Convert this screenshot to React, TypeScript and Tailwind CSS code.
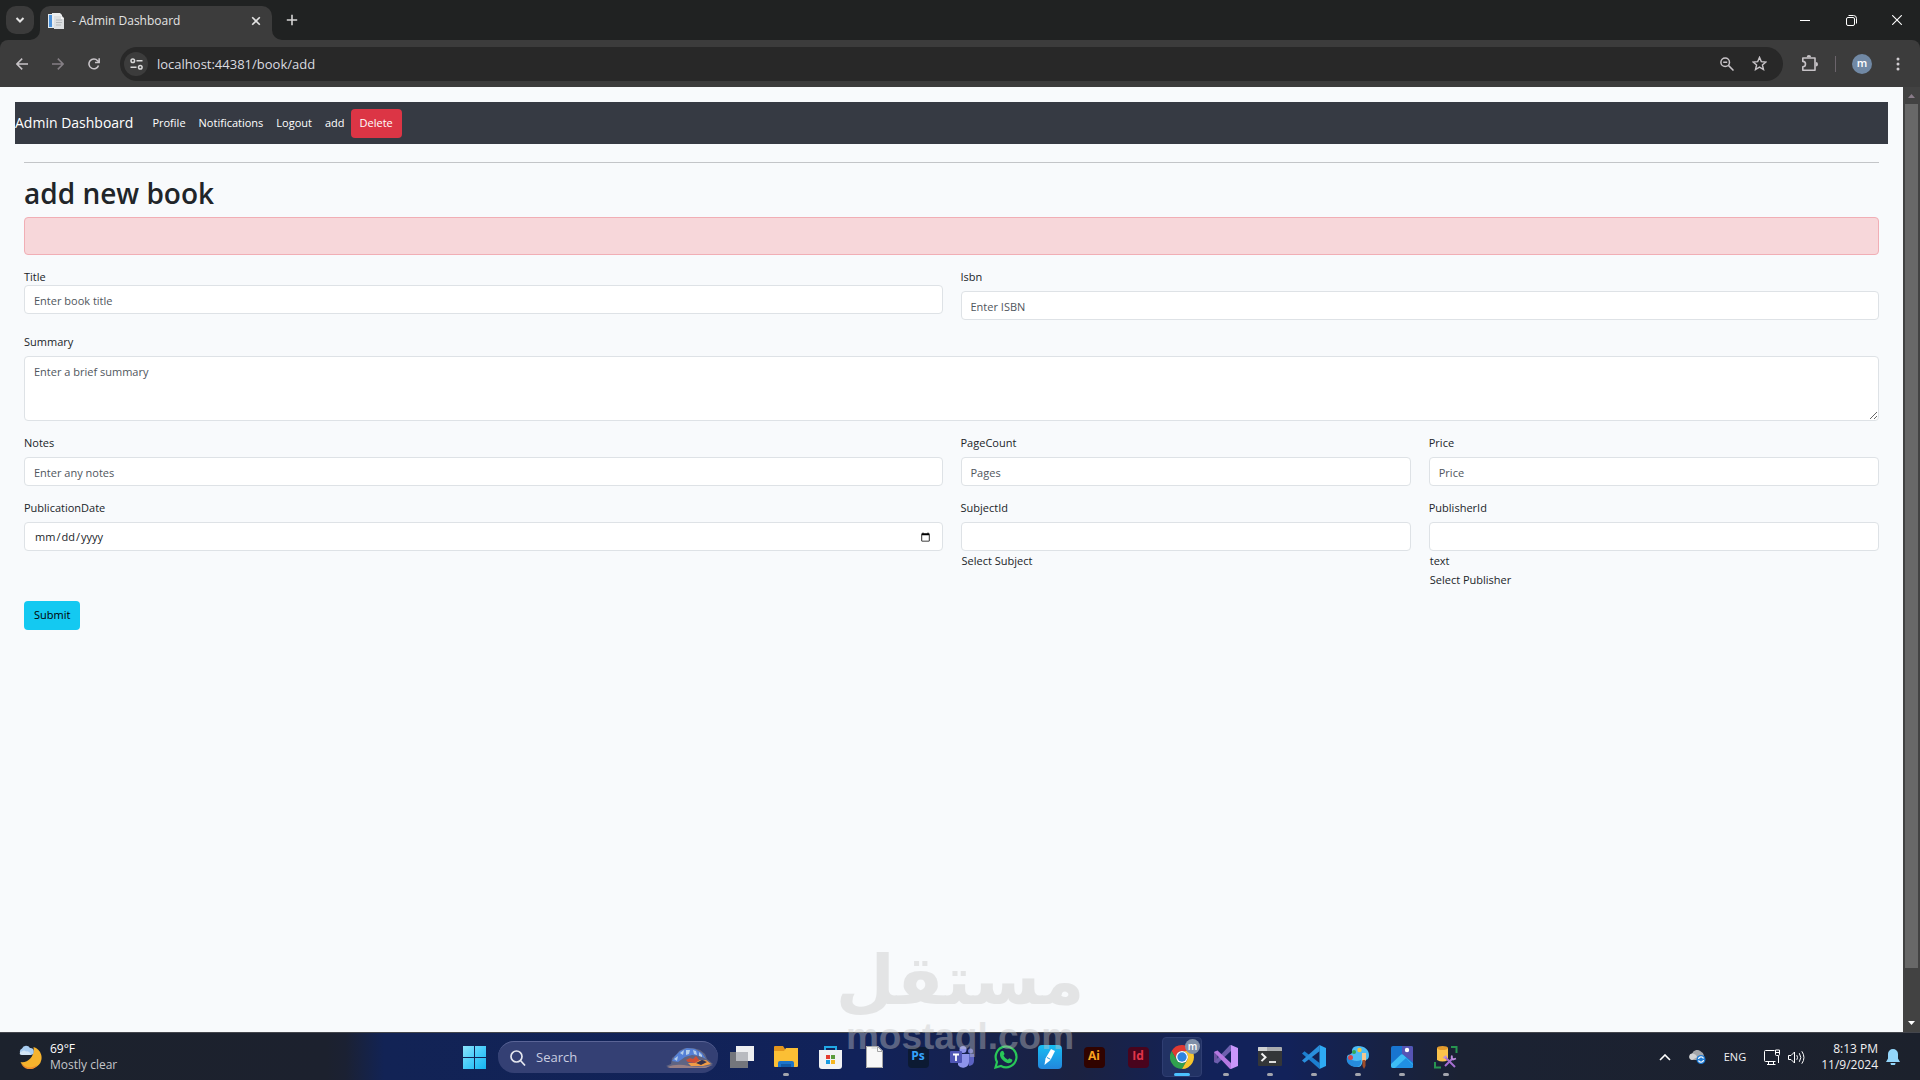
import { useId, type ReactNode } from "react";

const field =
  "block w-full rounded-[4px] border border-[#dee2e6] bg-white px-[9px] text-[11px] text-[#212529] placeholder:text-[#50565d] outline-none focus:border-[#86b7fe]";

function TitleBar() {
  return (
    <div className="flex h-10 shrink-0 items-start bg-[#202222]">
      <button aria-label="Search tabs" className="mt-1.5 ml-1.5 flex size-7 items-center justify-center rounded-[10px] bg-[#3b3b3b]">
        <svg width="12" height="12" viewBox="0 0 12 12" fill="none" stroke="#e3e3e3" strokeWidth="2">
          <path d="M2.5 4 6 7.5 9.5 4" />
        </svg>
      </button>
      <div className="relative ml-1.5 flex h-[34px] w-[232px] items-center self-end rounded-t-[10px] bg-[#3c3c3c] pr-2.5 pb-[5px] pl-2">
        <svg className="absolute bottom-0 -left-2.5" width="10" height="10" viewBox="0 0 10 10">
          <path d="M10 0v10H0A10 10 0 0 0 10 0Z" fill="#3c3c3c" />
        </svg>
        <svg className="absolute -right-2.5 bottom-0" width="10" height="10" viewBox="0 0 10 10">
          <path d="M0 0v10h10A10 10 0 0 1 0 0Z" fill="#3c3c3c" />
        </svg>
        <svg width="16" height="16" viewBox="0 0 16 16">
          <path d="M0 1h9v14H0Z" fill="#dfe9f1" />
          <path d="M1 2h3v12H1Z" fill="#4a90d9" />
          <path d="M4 0h8l2 2v9H4Z" fill="#eceeef" />
          <path d="M6 3h8l2 2v11H6Z" fill="#dcdfe1" />
          <path d="M8 7h6M8 9.5h6M8 12h5" stroke="#b3b8bb" />
          <path d="M13 3v3h3" fill="#f8f8f8" />
        </svg>
        <span className="ml-2 grow text-xs text-[#e3e3e3]">- Admin Dashboard</span>
        <button aria-label="Close tab" className="flex size-3 items-center justify-center">
          <svg width="10" height="10" viewBox="0 0 10 10" stroke="#e3e3e3" strokeWidth="1.6">
            <path d="m1.2 1.2 7.6 7.6M8.8 1.2 1.2 8.8" />
          </svg>
        </button>
      </div>
      <button aria-label="New tab" className="mt-3.5 ml-3.5 flex size-3 items-center justify-center">
        <svg width="12" height="12" viewBox="0 0 12 12" className="shrink-0" stroke="#d5d5d5" strokeWidth="1.6">
          <path d="M6 .8v10.4M.8 6h10.4" />
        </svg>
      </button>
      <div className="ml-auto flex h-10 items-center">
        <button aria-label="Minimize" className="flex w-[46px] justify-center">
          <svg width="10" height="10" viewBox="0 0 10 10" stroke="#fff">
            <path d="M0 5.5h10" />
          </svg>
        </button>
        <button aria-label="Restore" className="flex w-[46px] justify-center">
          <svg width="11" height="11" viewBox="0 0 11 11" fill="none" stroke="#fff">
            <rect x=".5" y="2.5" width="8" height="8" rx="1.5" />
            <path d="M2.5.5h5a3 3 0 0 1 3 3v5" />
          </svg>
        </button>
        <button aria-label="Close" className="flex w-[46px] justify-center">
          <svg width="10" height="10" viewBox="0 0 10 10" stroke="#fff" strokeWidth="1.1">
            <path d="m.2.2 9.6 9.6M9.8.2.2 9.8" />
          </svg>
        </button>
      </div>
    </div>
  );
}

function Toolbar() {
  return (
    <div className="bg-[#202222]">
      <div className="flex h-[47px] items-center rounded-t-[8px] bg-[#3c3c3c] pr-5 pl-4">
        <button aria-label="Back">
          <svg width="12" height="12" viewBox="0 0 12 12" fill="none" stroke="#c7c3c7" strokeWidth="1.5">
            <path d="M6.2.6.9 6l5.3 5.4M.9 6H12" />
          </svg>
        </button>
        <button aria-label="Forward" className="ml-6">
          <svg width="12" height="12" viewBox="0 0 12 12" fill="none" stroke="#857f85" strokeWidth="1.5">
            <path d="m5.8.6 5.3 5.4-5.3 5.4M11.1 6H0" />
          </svg>
        </button>
        <button aria-label="Reload" className="ml-6">
          <svg width="12" height="12" viewBox="0 0 13 13" fill="none" stroke="#c7c3c7" strokeWidth="1.7">
            <path d="M11.4 8A5.3 5.3 0 1 1 10.4 2.900L12 4.5" />
            <path d="M12.1.3v4.500H7.600" />
          </svg>
        </button>
        <div className="ml-5 flex h-[34px] grow items-center rounded-full bg-[#282828] pr-4 pl-1">
          <button aria-label="Site information" className="flex size-6 items-center justify-center rounded-full bg-[#3c3c3c]">
            <svg width="13" height="12" viewBox="0 0 13 12" fill="none" stroke="#d8d8d8" strokeWidth="1.5">
              <circle cx="2.8" cy="2.7" r="1.8" />
              <path d="M6.5 2.7h6M.5 9.200h6" />
              <circle cx="10.3" cy="9.2" r="1.8" />
            </svg>
          </button>
          <input
            aria-label="Address"
            defaultValue="localhost:44381/book/add"
            className="ml-[9px] h-6 min-w-0 grow bg-transparent text-[13px] text-[#dcdce0] outline-none"
          />
          <button aria-label="Zoom">
            <svg width="14" height="14" viewBox="0 0 14 14" fill="none" stroke="#c7c3c7" strokeWidth="1.5">
              <circle cx="5.2" cy="5.2" r="4.3" />
              <path d="m8.4 8.4 5.100 5.100M3.200 5.200h4" />
            </svg>
          </button>
          <button aria-label="Bookmark" className="ml-[18px]">
            <svg width="15" height="15" viewBox="0 0 15 15" fill="none" stroke="#c7c3c7" strokeWidth="1.4">
              <path d="m7.5 1.4 1.8 4.2 4.6.4-3.5 3 1.1 4.5-4-2.4-4 2.4L4.6 9 1.1 6l4.6-.4Z" />
            </svg>
          </button>
        </div>
        <button aria-label="Extensions" className="ml-[18px]">
          <svg width="17" height="17" viewBox="0 0 17 17" fill="none" stroke="#c7c3c7" strokeWidth="1.6" strokeLinejoin="round">
            <path d="M1.800 3H14V15.200H1.800V11.800A2.700 2.700 0 0 0 1.800 6.400Z" />
            <path d="M5.700 2.200a2.200 2.200 0 0 1 4.400 0ZM14.800 7a2.200 2.200 0 0 1 0 4.400Z" fill="#c7c3c7" stroke="none" />
          </svg>
        </button>
        <span className="ml-[17px] h-4 w-px bg-[#6b646b]" />
        <button aria-label="Profile m" className="ml-4 flex size-5 items-center justify-center rounded-full bg-[#7189a5] pb-0.5 text-[11px] leading-none font-semibold text-white">
          m
        </button>
        <button aria-label="Menu" className="ml-6">
          <svg width="4" height="14" viewBox="0 0 4 14" fill="#d0ccd0">
            <circle cx="2" cy="2" r="1.5" />
            <circle cx="2" cy="7" r="1.5" />
            <circle cx="2" cy="12" r="1.5" />
          </svg>
        </button>
      </div>
    </div>
  );
}

interface FieldProps {
  label: string;
  type?: string;
  placeholder?: string;
  span?: string;
  tight?: boolean;
  notes?: string[];
}

function Field({ label, type = "text", placeholder, span = "col-span-1", tight, notes = [] }: FieldProps) {
  const id = useId();
  return (
    <div className={span}>
      <label htmlFor={id} className={tight ? "block pt-0.5 leading-4" : "mb-1.5 block pt-0.5 leading-4"}>
        {label}
      </label>
      {type === "textarea" ? (
        <textarea id={id} placeholder={placeholder} className={`${field} h-[65px] resize py-1.5 leading-[18px]`} />
      ) : (
        <input id={id} type={type} placeholder={placeholder} className={`${field} h-[29px] pt-0.5`} />
      )}
      {notes.map((n) => (
        <span key={n} className="block px-px leading-[19px]">
          {n}
        </span>
      ))}
    </div>
  );
}

function BookPage() {
  return (
    <main className="min-w-0 grow overflow-hidden bg-[#f8fafc] px-[15px] pt-[15px] text-[11px] text-[#212529]">
      <nav className="flex h-[42px] items-center bg-[#363a43] text-white">
        <a href="#home" className="text-sm">Admin Dashboard</a>
        <div className="ml-[19px] flex items-center gap-[13px]">
          <a href="#profile">Profile</a>
          <a href="#notifications">Notifications</a>
          <a href="#logout">Logout</a>
          <a href="#add">add</a>
        </div>
        <button className="ml-1.5 h-[29px] rounded-[4px] bg-[#dc3545] px-[9px]">Delete</button>
      </nav>
      <div className="px-[9px] pt-[18px]">
        <hr className="border-t border-[#c3c5c8]" />
        <h1 className="mt-[13px] mb-1.5 text-[28px] leading-[35px] font-semibold">add new book</h1>
        <div role="alert" className="h-[38px] rounded-[4px] border border-[#f1aeb5] bg-[#f7d7da]" />
        <form className="mt-3 grid grid-cols-4 gap-x-[18px] gap-y-3" onSubmit={(e) => e.preventDefault()}>
          <Field label="Title" placeholder="Enter book title" span="col-span-2" tight />
          <Field label="Isbn" placeholder="Enter ISBN" span="col-span-2" />
          <Field label="Summary" type="textarea" placeholder="Enter a brief summary" span="col-span-4" />
          <Field label="Notes" placeholder="Enter any notes" span="col-span-2" />
          <Field label="PageCount" placeholder="Pages" />
          <Field label="Price" placeholder="Price" />
          <Field label="PublicationDate" type="date" span="col-span-2" />
          <Field label="SubjectId" notes={["Select Subject"]} />
          <Field label="PublisherId" notes={["text", "Select Publisher"]} />
          <div className="col-span-4">
            <button type="submit" className="h-[29px] rounded-[4px] bg-[#14c9f1] px-2.5 text-black">
              Submit
            </button>
          </div>
        </form>
      </div>
    </main>
  );
}

function ScrollBar() {
  return (
    <div className="flex w-[17px] shrink-0 flex-col items-center bg-[#424242]">
      <svg width="7" height="17" viewBox="0 0 7 17" className="shrink-0">
        <path d="M0 11h7L3.5 7Z" fill="#8a7c8a" />
      </svg>
      <div className="mr-px w-[13px] grow bg-[#686868]" />
      <div className="flex h-16 items-end pb-[7px]">
        <svg width="7" height="4" viewBox="0 0 7 4">
          <path d="M0 0h7L3.5 4Z" fill="#fff" />
        </svg>
      </div>
    </div>
  );
}

function Tile({ label, children, running }: { label: string; children: ReactNode; running?: boolean }) {
  return (
    <button aria-label={label} className="relative flex h-12 w-11 items-center justify-center">
      {children}
      {running && <span className="absolute bottom-[5px] h-[3px] w-1.5 rounded-full bg-[#a3a5ad]" />}
    </button>
  );
}

function AdobeMark({ text, className }: { text: string; className: string }) {
  return (
    <span className={`flex size-[21px] items-center justify-center rounded-[4px] pb-0.5 text-xs leading-none font-bold ${className}`}>
      {text}
    </span>
  );
}

function Taskbar() {
  return (
    <footer className="grid h-12 shrink-0 grid-cols-[1fr_auto_1fr] items-center border-t border-[#44464d] bg-[linear-gradient(90deg,#1c222d_0%,#1c212e_17%,#1b2133_18%,#122355_20%,#11225a_45%,#1b2241_56%,#12225a_63%,#12225a_67%,#1b2233_76%,#1c212c_100%)] text-xs text-white">
      <button className="flex items-center justify-self-start pl-[18px] text-left">
        <svg width="24" height="24" viewBox="0 0 24 24">
          <path d="M15.5 2A11 11 0 1 1 2.500 17C10 18.500 17 11 15.500 2Z" fill="#f6b32d" />
          <path d="M3 18c4 5 11 6 16 2-3 6-13 6-16-2Z" fill="#ef8b2c" />
          <path d="M4 10a3.500 3.500 0 0 1 0-6.500A4.500 4.500 0 0 1 12 3a3.500 3.500 0 0 1 .5 7Z" fill="#a9cdf0" />
          <path d="M2 9.500Q1 7 4 6.500q2-2 4 0 3-1 5 3L12 10H4Z" fill="#d4e5f5" />
        </svg>
        <span className="ml-2 leading-4">
          <span className="block">69°F</span>
          <span className="block text-[#c4c5ca]">Mostly clear</span>
        </span>
      </button>

      <div className="flex items-center">
        <Tile label="Start">
          <svg width="23" height="23" viewBox="0 0 23 23">
            <defs>
              <linearGradient id="win" x1="0" y1="0" x2="1" y2="1">
                <stop offset="0" stopColor="#8be3fb" />
                <stop offset=".5" stopColor="#47ccfa" />
                <stop offset="1" stopColor="#14b4f0" />
              </linearGradient>
            </defs>
            <path d="M0 0h11v11H0ZM12 0h11v11H12ZM0 12h11v11H0ZM12 12h11v11H12Z" fill="url(#win)" />
          </svg>
        </Tile>
        <label className="mx-0.5 flex h-8 w-[220px] items-center rounded-full border-t border-[#5a6496] bg-[#344074] pr-1 pl-3">
          <svg width="16" height="16" viewBox="0 0 16 16" fill="none" stroke="#e4e6ee" strokeWidth="1.700">
            <circle cx="6.5" cy="6.5" r="5.5" />
            <path d="m10.500 10.500 4.500 5" />
          </svg>
          <input aria-label="Search" placeholder="Search" className="ml-2.5 w-24 grow bg-transparent text-[13px] text-white outline-none placeholder:text-[#c9cde0]" />
          <svg width="48" height="22" viewBox="0 0 48 22">
            <path d="M0 19 5 17 6 11 10 8 13 4 19 1 27 1 34 3 39 7 41 12 47 17 40 21 6 21Z" fill="#5f6483" />
            <path d="M6 14 9 9 14 4 21 1 29 2 36 6 40 12 34 9 26 8 19 10 12 15Z" fill="#5580d6" />
            <path d="m8 12 4-3-1 5ZM14 6l4-3-1 5ZM20 3l4 0-1 4-3 1ZM27 3l3 1 1 4-3-1ZM33 5l3 3 0 2-3-1Z" fill="#b4cdea" />
            <path d="M20 13 24 11 27 12 30 9 34 14 29 16 22 15Z" fill="#cf4f34" />
            <path d="m22 16 7 0 5-3 2 1 4-1 5 4-8 2H25Z" fill="#ef9c47" />
            <path d="m30 16 6-3 5 2-6 3Z" fill="#33324c" />
            <path d="M1 20q10-4 22-1 12 2 24-1l-8 3H4Z" fill="#9a8084" />
          </svg>
        </label>
        <Tile label="Task view">
          <svg width="24" height="22" viewBox="0 0 24 22">
            <path d="M6 0h18v15H6Z" fill="#eeeff1" />
            <path d="M0 6h18v16H0Z" fill="#74767c" />
            <path d="M6 6h12v9H6Z" fill="#b9bbc0" />
          </svg>
        </Tile>
        <Tile label="File Explorer" running>
          <svg width="24" height="22" viewBox="0 0 24 22">
            <path d="M0 1q0-1 1-1h8l2 3v4H0Z" fill="#e2951d" />
            <path d="M0 5h10l2-3h12v18q0 1-1 1H1q-1 0-1-1Z" fill="#fbbf35" />
            <path d="M4 21v-4q0-2 2-2h12q2 0 2 2v4Z" fill="#1d74c9" />
            <path d="M7 18h10v3H7Z" fill="#135aa5" />
          </svg>
        </Tile>
        <Tile label="Microsoft Store">
          <svg width="23" height="23" viewBox="0 0 23 23">
            <path d="M6 5V1h11v4" fill="none" stroke="#21a8e6" strokeWidth="2" />
            <path d="M0 4h23v16q0 3-3 3H3q-3 0-3-3Z" fill="#f1f2f4" />
            <path d="M7 9h4v4H7Z" fill="#e43b2f" />
            <path d="M12 9h4v4h-4Z" fill="#5a9b3c" />
            <path d="M7 14h4v4H7Z" fill="#1a9be0" />
            <path d="M12 14h4v4h-4Z" fill="#f5b51f" />
          </svg>
        </Tile>
        <Tile label="Document">
          <svg width="17" height="22" viewBox="0 0 17 22">
            <path d="M0 0h12l5 5v17H0Z" fill="#f8f8f8" />
            <path d="M11.500.5v5h5M.5.5h11l5 5v16H.5Z" fill="none" stroke="#a5a5a5" />
          </svg>
        </Tile>
        <Tile label="Photoshop"><AdobeMark text="Ps" className="bg-[#0c1a33] text-[#35a4fb]" /></Tile>
        <Tile label="Teams">
          <svg width="24" height="22" viewBox="0 0 24 22">
            <circle cx="13" cy="3.5" r="3.5" fill="#8d94ea" />
            <circle cx="20.5" cy="5" r="2.5" fill="#6e74cf" />
            <path d="M17 8h7v7a5 5 0 0 1-5 5Z" fill="#5b62c2" />
            <path d="M8 8h11v8a6 6 0 0 1-11 3Z" fill="#8d94ea" />
            <rect y="5" width="12" height="12" rx="1" fill="#4f56b5" />
            <path d="M3 8.500h6M6 8.500v6.500" stroke="#fff" strokeWidth="1.8" />
          </svg>
        </Tile>
        <Tile label="WhatsApp">
          <svg width="24" height="24" viewBox="0 0 24 24">
            <path d="M1.500 22.500 3 17a10.400 10.400 0 1 1 4 4Z" fill="none" stroke="#29c758" strokeWidth="2.2" />
            <path d="M7 6.500c1-1.200 2-1 2.500 0l1 2.200c.2.700-.8 1.400-1 1.900 1 2 2.300 3.200 4.400 4.100.6-.2 1.200-1.600 1.900-1.300l2.300 1.100c.8.500 0 3.200-2.300 3.600C11.500 19 5.500 13 6 9.200 6.100 8 6.300 7.200 7 6.500Z" fill="#29c758" />
          </svg>
        </Tile>
        <Tile label="Notes">
          <svg width="24" height="24" viewBox="0 0 24 24">
            <defs>
              <linearGradient id="pen" x1="0" y1="0" x2="0" y2="1">
                <stop offset="0" stopColor="#17bdf3" />
                <stop offset="1" stopColor="#2386dc" />
              </linearGradient>
            </defs>
            <rect width="24" height="24" rx="4" fill="url(#pen)" />
            <path d="m13 4 4 2-4.500 9-6 5 1-6.500Z" fill="#fff" />
            <path d="m9 12.500 3.500 1.800" stroke="#2a9be0" />
          </svg>
        </Tile>
        <Tile label="Illustrator"><AdobeMark text="Ai" className="bg-[#300300] text-[#f9a11f]" /></Tile>
        <Tile label="InDesign"><AdobeMark text="Id" className="bg-[#49041d] text-[#e2354b]" /></Tile>
        <button aria-label="Chrome" className="relative flex h-12 w-11 items-center justify-center">
          <span className="absolute inset-x-0.5 inset-y-1 rounded-[4px] border border-[#2f3e72] bg-[#223264]" />
          <svg className="relative" width="24" height="24" viewBox="0 0 24 24">
            <path d="M12 6h10.390A12 12 0 0 0 1.600 6l5.200 9A6 6 0 0 1 12 6Z" fill="#df3a32" />
            <path d="M6.800 15 1.600 6A12 12 0 0 0 12 24l5.200-9A6 6 0 0 1 6.800 15Z" fill="#31a04e" />
            <path d="M17.200 15 12 24A12 12 0 0 0 22.390 6H12A6 6 0 0 1 17.200 15Z" fill="#f8c52c" />
            <circle cx="12" cy="12" r="6" fill="#fff" />
            <circle cx="12" cy="12" r="4.7" fill="#2c83e0" />
          </svg>
          <span className="absolute top-1.5 right-1 flex size-[15px] items-center justify-center rounded-full bg-[#8090a8] pb-0.5 text-[10px] leading-none font-semibold">m</span>
          <span className="absolute bottom-[5px] h-[3px] w-4 rounded-full bg-[#4cc2ff]" />
        </button>
        <Tile label="Visual Studio" running>
          <svg width="24" height="24" viewBox="0 0 24 24">
            <path d="M0 7 3.500 5.500v13L0 17Z" fill="#6a52a0" />
            <path d="M3.500 18.500 17 6V0h-1L0 17Z" fill="#6d5fae" />
            <path d="M0 7 3.500 5.500 17 18v6h-1Z" fill="#b578e0" />
            <path d="m17 0 7 3v18l-7 3Z" fill="#c996fa" />
          </svg>
        </Tile>
        <Tile label="Terminal" running>
          <svg width="24" height="20" viewBox="0 0 24 20">
            <rect width="24" height="19" rx="1" fill="#343638" />
            <path d="M0 1q0-1 1-1h22q1 0 1 1v3H0Z" fill="#a9abae" />
            <path d="M0 1q0-1 1-1h8v4H0Z" fill="#cfd1d3" />
            <path d="m3.500 6.500 4 3.800-4 3.800" fill="none" stroke="#f1f1f1" strokeWidth="2" />
            <path d="M11 15h7" stroke="#f1f1f1" strokeWidth="1.8" />
          </svg>
        </Tile>
        <Tile label="VS Code" running>
          <svg width="24" height="24" viewBox="0 0 24 24">
            <path d="M0 8.500 2.500 6.300 17.500 18v6L0 8.500Z" fill="#1c7fd0" />
            <path d="M0 15.500 17.500 0v6.300L2.500 17.700Z" fill="#2a8fdd" />
            <path d="M17.500 0 24 3v18l-6.500 3Z" fill="#2eaaf3" />
          </svg>
        </Tile>
        <Tile label="Paint" running>
          <svg width="24" height="24" viewBox="0 0 24 24">
            <path d="M12 1c7 0 11 4 11 9s-3 5-5 5-1 7-6 7C5 22 1 17 1 12.500q0-3 3-3L6 8Q5 1 12 1Z" fill="#4dbcf3" />
            <path d="M1 12q-2 8 8 10 7 0 6-7-6 3-14-3Z" fill="#268cdd" />
            <circle cx="8" cy="7" r="2" fill="#32a852" />
            <circle cx="13.5" cy="5" r="2.2" fill="#f6c336" />
            <circle cx="4.5" cy="12.5" r="2.5" fill="#d6484b" />
            <path d="M16 8h4v8h-4Z" fill="#f2c690" />
            <path d="M16.500 15h3v6l-1.500 3-1.500-3Z" fill="#9f4d2a" />
          </svg>
        </Tile>
        <Tile label="Photos" running>
          <svg width="22" height="22" viewBox="0 0 22 22">
            <rect width="22" height="22" rx="2" fill="#1875d0" />
            <path d="M11 0h9q2 0 2 2v14L11 8Z" fill="#5654b4" />
            <path d="M0 18 9.500 9q1.500-1.500 3 0L22 18v2q0 2-2 2H2q-2 0-2-2Z" fill="#3dbdf5" />
            <path d="m4 22 11-10 7 7v1q0 2-2 2Z" fill="#2090e2" />
            <circle cx="16" cy="4" r="2.2" fill="#fff" />
          </svg>
        </Tile>
        <Tile label="SQL Server Management Studio" running>
          <svg width="24" height="24" viewBox="0 0 24 24">
            <path d="M3 3h11v12q-5.500 3-11 0Z" fill="#fbc34c" />
            <ellipse cx="8.5" cy="3" rx="5.5" ry="2" fill="#e39b2d" />
            <path d="M17 2h5.500v6M1 17v5.500h6" fill="none" stroke="#279550" strokeWidth="2" />
            <path d="m11 21 8-8M11 12l10 10" stroke="#a56fd0" strokeWidth="2" />
            <path d="M18 10.500q-1 3 1 4l3-1M9.500 13l3-2" fill="none" stroke="#bd8ddd" strokeWidth="1.8" />
          </svg>
        </Tile>
      </div>

      <div className="flex items-center justify-self-end pr-5 text-[#f1f1f3]">
        <button aria-label="Show hidden icons">
          <svg width="12" height="7" viewBox="0 0 12 7" fill="none" stroke="#fff" strokeWidth="1.6">
            <path d="m1 6 5-5 5 5" />
          </svg>
        </button>
        <button aria-label="OneDrive" className="ml-[18px]">
          <svg width="17" height="14" viewBox="0 0 17 14">
            <path d="M3 10a3.200 3.200 0 0 1 0-6.200A5.500 5.500 0 0 1 12.500 2 4 4 0 0 1 14 8l-5 2Z" fill="#a4a6aa" />
            <path d="M4 3.500Q7 4 8.500 7L3 10A3.200 3.200 0 0 1 4 3.500Z" fill="#d2d3d5" />
            <circle cx="12" cy="9.500" r="4.500" fill="#1d7ad4" />
            <path d="M9.500 9a2.600 2.600 0 0 1 5-.5M14.500 10a2.600 2.600 0 0 1-5 .5" fill="none" stroke="#fff" strokeWidth="1.3" />
          </svg>
        </button>
        <button className="ml-[18px] text-[11px]">ENG</button>
        <button aria-label="Network" className="ml-[18px]">
          <svg width="16" height="17" viewBox="0 0 16 17" fill="none" stroke="#fff">
            <path d="M10.500 1.500h-9q-1 0-1 1v9q0 1 1 1h10M14.500 7v7M4.500 12.500v3M9.500 12.500v3M3 15.500h8.500" />
            <path d="M11.500 1h4v4.500q0 1-1 1h-2q-1 0-1-1ZM11.500 3.500h4" />
          </svg>
        </button>
        <button aria-label="Volume" className="ml-2">
          <svg width="17" height="15" viewBox="0 0 17 15" fill="none" stroke="#fff">
            <path d="M.5 5.500h2.500L6.500 2v11L3 9.500H.5ZM8.800 5.200q1.500 2.300 0 4.600M11.300 3.200q3 4.300 0 8.600M13.800 1.300q4.300 6.200 0 12.400" />
          </svg>
        </button>
        <button className="ml-4 text-right text-xs leading-4">
          <span className="block">8:13 PM</span>
          <span className="block">11/9/2024</span>
        </button>
        <button aria-label="Notifications" className="ml-2">
          <svg width="14" height="16" viewBox="0 0 14 16" fill="#93d6fa">
            <path d="M7 0a5 5 0 0 1 5 5v4.500l2 3.500H0L2 9.500V5a5 5 0 0 1 5-5ZM4.500 14h5a2.500 2.500 0 0 1-5 0Z" />
          </svg>
        </button>
      </div>
    </footer>
  );
}

function Watermark() {
  return (
    <div className="pointer-events-none absolute bottom-[21px] left-1/2 flex -translate-x-1/2 flex-col items-center text-[#c5c5c5] opacity-40">
      <span lang="ar" dir="rtl" className="font-['DejaVu_Sans',sans-serif] text-[68px] leading-[68px] font-bold">
        مستقل
      </span>
      <span className="font-['Liberation_Sans',sans-serif] text-[37px] leading-[44px] font-bold">mostaql.com</span>
    </div>
  );
}

export default function App() {
  return (
    <div className="relative flex h-screen flex-col overflow-hidden font-['Open_Sans',sans-serif]">
      <TitleBar />
      <Toolbar />
      <div className="flex min-h-0 grow">
        <BookPage />
        <ScrollBar />
      </div>
      <Taskbar />
      <Watermark />
    </div>
  );
}
